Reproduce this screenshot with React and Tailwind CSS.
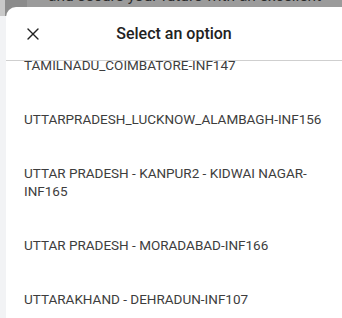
import { X } from "lucide-react";

const options = [
  "TAMILNADU_COIMBATORE-INF147",
  "UTTARPRADESH_LUCKNOW_ALAMBAGH-INF156",
  "UTTAR PRADESH - KANPUR2 - KIDWAI NAGAR-INF165",
  "UTTAR PRADESH - MORADABAD-INF166",
  "UTTARAKHAND - DEHRADUN-INF107",
];

export default function App() {
  return (
    <div
      className="w-[342px] h-[318px] overflow-hidden bg-[#f2f3f5] flex flex-col"
      style={{ fontFamily: "Roboto, 'Liberation Sans', sans-serif" }}
    >
      {/* dimmed page behind the sheet */}
      <div className="h-[16px] shrink-0 flex">
        <div className="w-[5px] bg-[#c9c9c9]" />
        <div className="w-[22px] bg-[#8c8c8c]" />
        <div className="flex-1 bg-[#9b9b9b] overflow-hidden">
          <p className="-mt-[12px] pl-[21px] text-[15.5px] leading-[16px] text-[#2a2a2a] whitespace-nowrap">
            and secure your future with an excellent
          </p>
        </div>
      </div>

      {/* bottom sheet */}
      <div className="-mt-[9px] ml-[6px] flex-1 min-h-0 flex flex-col bg-white rounded-tl-[10px] overflow-hidden">
        <div className="h-[54px] shrink-0 flex items-center border-b border-[#cfcfcf]">
          <button className="w-[24px] h-[24px] ml-[15px] flex items-center justify-center text-[#222]">
            <X size={20} strokeWidth={1.6} />
          </button>
          <h2 className="flex-1 text-center pr-[39px] text-[16px] font-medium text-[#222]">
            Select an option
          </h2>
        </div>
        <div className="flex-1 min-h-0 overflow-hidden">
          <ul className="-mt-[23px] text-[13.5px] leading-[18px] text-[#3d3d3d]">
            {options.map((o) => (
              <li key={o} className="pl-[18px] pr-[12px] py-[18px]">
                {o}
              </li>
            ))}
          </ul>
        </div>
      </div>
    </div>
  );
}
